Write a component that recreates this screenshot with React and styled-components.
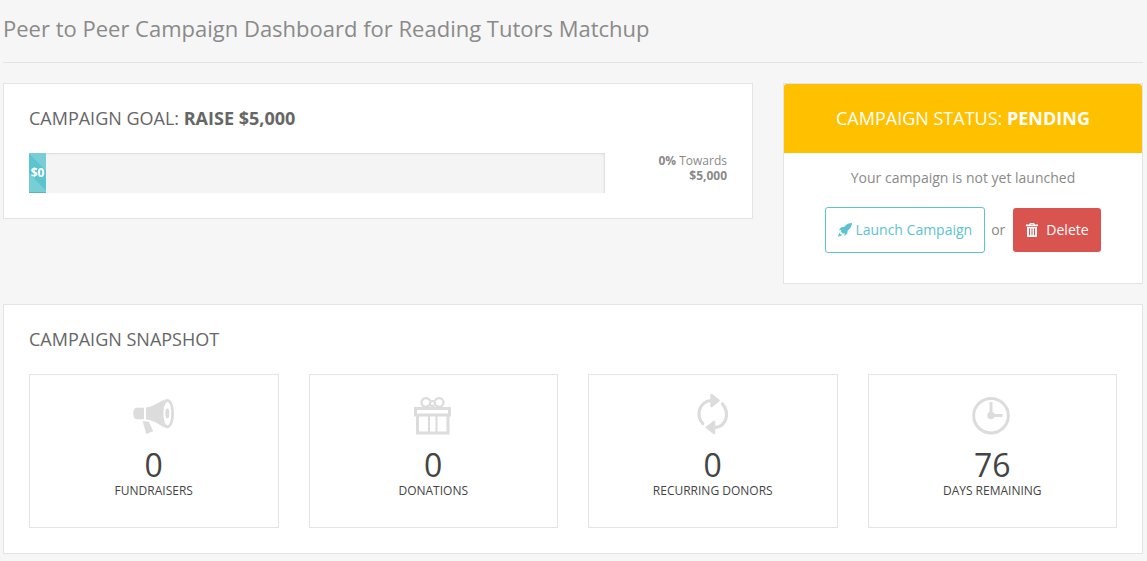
import React from 'react'
import styled, { createGlobalStyle } from 'styled-components'

const GlobalStyle = createGlobalStyle`
  :root {
    --colorPage: #f6f6f6;
    --colorBorder: #e4e4e4;
    --colorText: #8a8a8a;
    --colorHeading: #666;
    --colorPrimary: #5bc4ce;
    --colorDanger: #d9534f;
    --colorPending: #ffc000;
  }

  *, *::before, *::after {
    box-sizing: border-box;
  }

  body {
    margin: 0;
    background-color: var(--colorPage);
    color: var(--colorText);
    font-family: 'Open Sans', sans-serif;
    font-size: 14px;
    line-height: 20px;
  }

  h1, h2, p, dl, dd {
    margin: 0;
    font-weight: 400;
  }
`

const Page = styled.main`
  padding: 14px 4px 8px 3px;
`

const PageTitle = styled.h1`
  font-size: 22px;
  line-height: 28px;
  padding-bottom: 20px;
  margin-bottom: 20px;
  border-bottom: 1px solid var(--colorBorder);
`

const TopRow = styled.div`
  display: grid;
  grid-template-columns: 25fr 12fr;
  align-items: start;
  gap: 30px;
  margin-bottom: 20px;
`

const Card = styled.section`
  background-color: #fff;
  border: 1px solid var(--colorBorder);
  padding: ${p => p.$flush ? '0' : '25px'};
`

const CardTitle = styled.h2`
  color: var(--colorHeading);
  font-size: 18px;
  line-height: 18px;
  margin-bottom: 26px;
  text-transform: uppercase;
`

const GoalRow = styled.div`
  display: flex;
  align-items: flex-start;
  gap: 30px;
`

const Track = styled.div`
  flex: 1;
  height: 40px;
  background-color: #f4f4f4;
  box-shadow: inset -1px 1px 2px rgba(0, 0, 0, 0.1);
`

const Bar = styled.div`
  height: 100%;
  min-width: 17px;
  background-color: var(--colorPrimary);
  background-image: linear-gradient(
    45deg,
    rgba(255, 255, 255, 0.17) 25%,
    transparent 25%,
    transparent 50%,
    rgba(255, 255, 255, 0.17) 50%,
    rgba(255, 255, 255, 0.17) 75%,
    transparent 75%
  );
  background-size: 40px 40px;
  box-shadow: inset 0 -1px 0 rgba(0, 0, 0, 0.15);
  color: #fff;
  font-size: 12px;
  font-weight: 700;
  line-height: 40px;
  text-align: center;
`

const GoalNote = styled.p`
  width: 92px;
  font-size: 12px;
  line-height: 15px;
  text-align: right;
`

const StatusTitle = styled.h2`
  background-color: var(--colorPending);
  border-radius: 3px 3px 0 0;
  color: #fff;
  font-size: 18px;
  line-height: 18px;
  padding: 25px 10px 26px;
  text-align: center;
  text-transform: uppercase;
`

const StatusBody = styled.div`
  padding: 15px 15px 30px;
  text-align: center;
`

const Actions = styled.div`
  display: flex;
  align-items: center;
  justify-content: center;
  margin-top: 19px;

  span {
    margin: 0 8px 0 6px;
  }
`

const Button = styled.button`
  display: inline-flex;
  align-items: center;
  gap: ${p => p.$danger ? '7px' : '3px'};
  padding: 12px;
  border: ${p => p.$danger ? '0' : '1px solid var(--colorPrimary)'};
  border-radius: 3px;
  background-color: ${p => p.$danger ? 'var(--colorDanger)' : '#fff'};
  color: ${p => p.$danger ? '#fff' : 'var(--colorPrimary)'};
  font: inherit;
  cursor: pointer;

  svg {
    width: 14px;
    height: 14px;
  }
`

const Tiles = styled.dl`
  display: grid;
  grid-template-columns: repeat(4, 1fr);
  gap: 30px;
`

const Tile = styled.div`
  display: flex;
  flex-direction: column;
  align-items: center;
  border: 1px solid var(--colorBorder);
  padding: 15px 10px 29px;
  color: #444;

  svg {
    width: 50px;
    height: 50px;
    color: #dcdcdc;
  }
`

const TileValue = styled.dd`
  font-size: 32px;
  line-height: 39px;
  margin-top: 5px;
`

const TileLabel = styled.dt`
  order: 1;
  font-size: 12px;
  line-height: 14px;
  text-transform: uppercase;
`

function IconRocket () {
  return (
    <svg viewBox="0 0 14 14" fill="currentColor" aria-hidden="true">
      <path d="M14 0C10.6.1 8.100 1.300 6.100 3.900L3.100 4.200.900 7.200l2.700-.3-.9 1.500 2.400 2.400 1.600-.9-.3 3 2.900-2.300.4-3.100C12.500 5.400 13.900 3.200 14 0z" />
      <path d="M2.300 9.200C1 9.900.5 11.500 0 13.700c2.200-.4 3.600-.9 4.500-2.200l-1.900.5.700-1.100-1.400.4z" />
    </svg>
  )
}

function IconTrash () {
  return (
    <svg viewBox="0 0 14 14" fill="currentColor" aria-hidden="true">
      <path fillRule="evenodd" d="M4.500 1.500V.8c0-.5.300-.8.800-.8h3.400c.5 0 .8.300.8.800v.7H13v1.700H1V1.500zM5.700 1v.5h2.600V1zM2 4h10v9c0 .6-.4 1-1 1H3c-.6 0-1-.4-1-1zm2 1.300v6.900h1V5.300zm2.500 0v6.900h1V5.300zm2.500 0v6.900h1V5.300z" />
    </svg>
  )
}

function IconMegaphone () {
  return (
    <svg viewBox="0 0 50 50" fill="currentColor" aria-hidden="true">
      <path d="M7.500 17.800H15v11.500H7.500C5.500 29.300 4.300 27 4.300 23.600s1.200-5.800 3.200-5.800zM17 17.500c6-.7 12.500-4.200 18.500-8.200-3.800 6.500-3.800 22 0 28.500-6-4-12.500-7.700-18.500-8.300z" />
      <path fillRule="evenodd" d="M38.300 9c4.100 0 6.700 6.500 6.700 14.600s-2.600 14.700-6.700 14.700-6.800-6.600-6.800-14.700S34.200 9 38.300 9zm.2 3c-2.300 0-4 5-4 11.600s1.700 11.700 4 11.700 3.700-5.100 3.700-11.700S40.800 12 38.500 12z" />
      <ellipse cx="38.300" cy="23.600" rx="2" ry="5" />
      <path d="M13.700 31l6.200.7 4.300 9.600-7 2.700z" />
    </svg>
  )
}

function IconGift () {
  return (
    <svg viewBox="0 0 50 50" fill="none" stroke="currentColor" strokeWidth="3" aria-hidden="true">
      <path d="M7.500 18.500h34v6.500h-34zM9.500 25v18h30.500v-18" />
      <path strokeWidth="2" d="M21 25v18M28.500 25v18" />
      <path strokeWidth="2.200" d="M21.500 14.800c-1 1.600-2.600 2-4.300 2a4.400 4.400 0 1 1 4.800-6M27.500 14.800c1 1.600 2.600 2 4.300 2a4.400 4.400 0 1 0-4.800-6" />
      <circle cx="24.500" cy="13.500" r="2.600" strokeWidth="2" />
    </svg>
  )
}

function IconCycle () {
  return (
    <svg viewBox="0 0 50 50" fill="none" stroke="currentColor" strokeWidth="3.200" strokeLinecap="round" aria-hidden="true">
      <path d="M14.800 33.500C7.500 25.500 11 12 23 10.500M34.500 14C42 23 38.500 36.500 27 37.500" />
      <path d="M23.500 5v11L30.500 10.500zM26 32v11L19 37.500z" strokeWidth="2.500" strokeLinejoin="round" fill="currentColor" />
    </svg>
  )
}

function IconClock () {
  return (
    <svg viewBox="0 0 50 50" fill="none" stroke="currentColor" strokeWidth="3" aria-hidden="true">
      <circle cx="24" cy="25.700" r="17.300" />
      <path d="M24 12v13.500H35.500" />
      <circle cx="24" cy="25.500" r="3.700" fill="currentColor" stroke="none" />
    </svg>
  )
}

const stats = [
  { label: 'Fundraisers', value: 0, Icon: IconMegaphone },
  { label: 'Donations', value: 0, Icon: IconGift },
  { label: 'Recurring donors', value: 0, Icon: IconCycle },
  { label: 'Days remaining', value: 76, Icon: IconClock }
]

export default function App () {
  const percent = 0

  return (
    <Page>
      <GlobalStyle />
      <PageTitle>Peer to Peer Campaign Dashboard for Reading Tutors Matchup</PageTitle>
      <TopRow>
        <Card>
          <CardTitle>Campaign goal: <strong>Raise $5,000</strong></CardTitle>
          <GoalRow>
            <Track role="progressbar" aria-valuenow={percent} aria-valuemin={0} aria-valuemax={100}>
              <Bar style={{ width: `${percent}%` }}>$0</Bar>
            </Track>
            <GoalNote><strong>0%</strong> Towards <strong>$5,000</strong></GoalNote>
          </GoalRow>
        </Card>
        <Card $flush>
          <StatusTitle>Campaign status: <strong>Pending</strong></StatusTitle>
          <StatusBody>
            <p>Your campaign is not yet launched</p>
            <Actions>
              <Button type="button"><IconRocket />Launch Campaign</Button>
              <span>or</span>
              <Button type="button" $danger><IconTrash />Delete</Button>
            </Actions>
          </StatusBody>
        </Card>
      </TopRow>
      <Card>
        <CardTitle>Campaign snapshot</CardTitle>
        <Tiles>
          {stats.map(({ label, value, Icon }) => (
            <Tile key={label}>
              <Icon />
              <TileLabel>{label}</TileLabel>
              <TileValue>{value}</TileValue>
            </Tile>
          ))}
        </Tiles>
      </Card>
    </Page>
  )
}
